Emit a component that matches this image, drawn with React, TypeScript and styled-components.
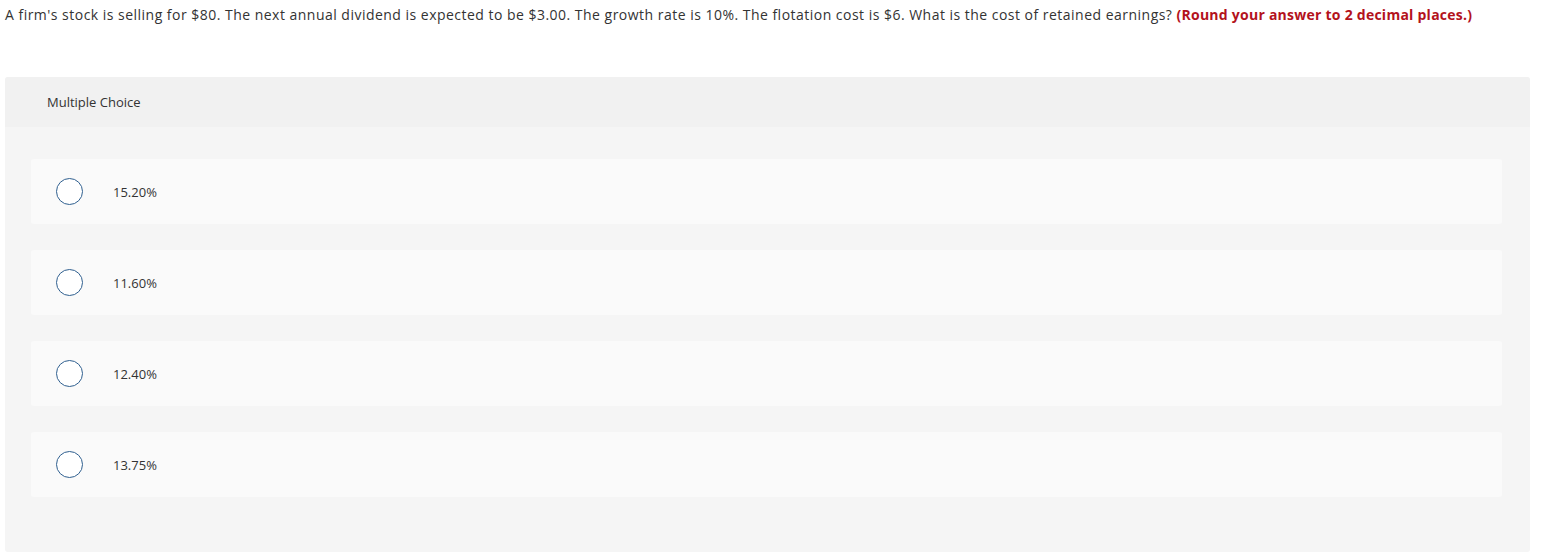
import styled, { createGlobalStyle } from "styled-components";

const GlobalStyle = createGlobalStyle`
  body {
    margin: 0;
    background: #ffffff;
    font-family: "Open Sans", "Liberation Sans", Arial, sans-serif;
    color: #333333;
  }
`;

const options = ["15.20%", "11.60%", "12.40%", "13.75%"];

function App() {
  return (
    <Page>
      <GlobalStyle />
      <Question>
        A firm's stock is selling for $80. The next annual dividend is expected
        to be $3.00. The growth rate is 10%. The flotation cost is $6. What is
        the cost of retained earnings?{" "}
        <Hint>(Round your answer to 2 decimal places.)</Hint>
      </Question>
      <Panel>
        <PanelHeader>Multiple Choice</PanelHeader>
        <OptionList>
          {options.map((o) => (
            <Option key={o}>
              <Radio />
              <OptionLabel>{o}</OptionLabel>
            </Option>
          ))}
        </OptionList>
      </Panel>
    </Page>
  );
}

const Page = styled.div`
  padding: 5px 13px 0 5px;
`;

const Question = styled.div`
  font-size: 14px;
  line-height: 20px;
  letter-spacing: 0.48px;
  color: #333333;
  white-space: nowrap;
`;

const Hint = styled.strong`
  color: #b3121c;
  font-weight: 700;
  letter-spacing: 0.25px;
`;

const Panel = styled.div`
  margin-top: 52px;
  background: #f5f5f5;
  border-radius: 3px;
  overflow: hidden;
  height: 475px;
`;

const PanelHeader = styled.div`
  height: 50px;
  display: flex;
  align-items: center;
  padding-left: 42px;
  background: #f1f1f1;
  font-size: 13px;
  color: #333333;
`;

const OptionList = styled.div`
  display: flex;
  flex-direction: column;
  gap: 26px;
  padding: 32px 28px 0 26px;
`;

const Option = styled.div`
  height: 65px;
  display: flex;
  align-items: center;
  background: #fafafa;
  border-radius: 3px;
  padding-left: 25px;
`;

const Radio = styled.span`
  width: 25px;
  height: 25px;
  border: 1.5px solid #2f5f8f;
  border-radius: 50%;
  background: #ffffff;
  flex-shrink: 0;
`;

const OptionLabel = styled.span`
  margin-left: 30px;
  font-size: 13px;
  color: #333333;
`;

export default App;
